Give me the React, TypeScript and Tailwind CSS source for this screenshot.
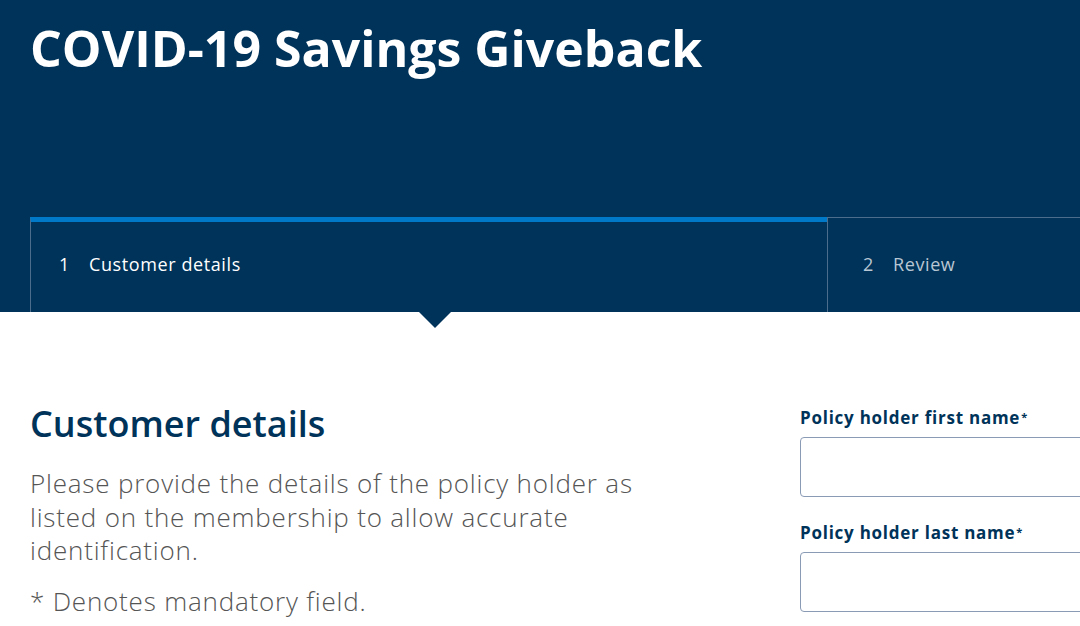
import React from "react";

export default function App() {
  return (
    <div className="w-[1080px] h-[626px] overflow-hidden bg-white" style={{ fontFamily: "'Open Sans', 'Liberation Sans', sans-serif" }}>
      <header className="bg-[#003359] h-[312px] flex flex-col">
        <h1 className="pl-[30px] pt-[18px] text-[50px] leading-[60px] font-bold text-white">COVID-19 Savings Giveback</h1>
        <div className="mt-auto flex ml-[30px] h-[95px]">
          <div className="relative w-[797px] shrink-0 border-t-[5px] border-[#0079c8] border-l border-l-[#4d6d8c] flex items-center pb-[6px] pl-[28px] text-[18px] tracking-[0.6px] text-white">
            <span className="w-[30px]">1</span>
            <span>Customer details</span>
            <div className="absolute left-[388px] top-[90px] w-0 h-0 border-l-[16px] border-r-[16px] border-t-[16px] border-l-transparent border-r-transparent border-t-[#003359]" />
          </div>
          <div className="flex-1 border-t border-t-[#4d6d8c] border-l border-l-[#4d6d8c] flex items-center pb-[2px] pl-[35px] text-[18px] tracking-[0.6px] text-[#b9c6d3]">
            <span className="w-[30px]">2</span>
            <span>Review</span>
          </div>
        </div>
      </header>
      <main className="flex items-start">
        <section className="w-[770px] shrink-0 pl-[30px] pt-[90px]">
          <h2 className="text-[36px] leading-[44px] font-semibold text-[#003359]">Customer details</h2>
          <p className="mt-[21px] w-[640px] text-[26px] leading-[33.5px] tracking-[0.8px] font-light text-[#555]">
            Please provide the details of the policy holder as listed on the membership to allow accurate identification.
          </p>
          <p className="mt-[17px] text-[26px] leading-[33.5px] tracking-[0.8px] font-light text-[#555]">* Denotes mandatory field.</p>
        </section>
        <section className="flex-1 min-w-0 pl-[30px] pt-[94px] overflow-hidden">
          <div>
            <label className="block whitespace-nowrap text-[17px] font-bold tracking-[0.75px] text-[#003359] leading-[24px]">
              Policy holder first name<sup className="text-[11px] ml-[1px] relative -top-[3px]">*</sup>
            </label>
            <div className="mt-[7px] h-[60px] w-[320px] rounded-[4px] border border-[#8a9bb5]" />
          </div>
          <div className="mt-[24px]">
            <label className="block whitespace-nowrap text-[17px] font-bold tracking-[0.75px] text-[#003359] leading-[24px]">
              Policy holder last name<sup className="text-[11px] ml-[1px] relative -top-[3px]">*</sup>
            </label>
            <div className="mt-[7px] h-[60px] w-[320px] rounded-[4px] border border-[#8a9bb5]" />
          </div>
        </section>
      </main>
    </div>
  );
}
